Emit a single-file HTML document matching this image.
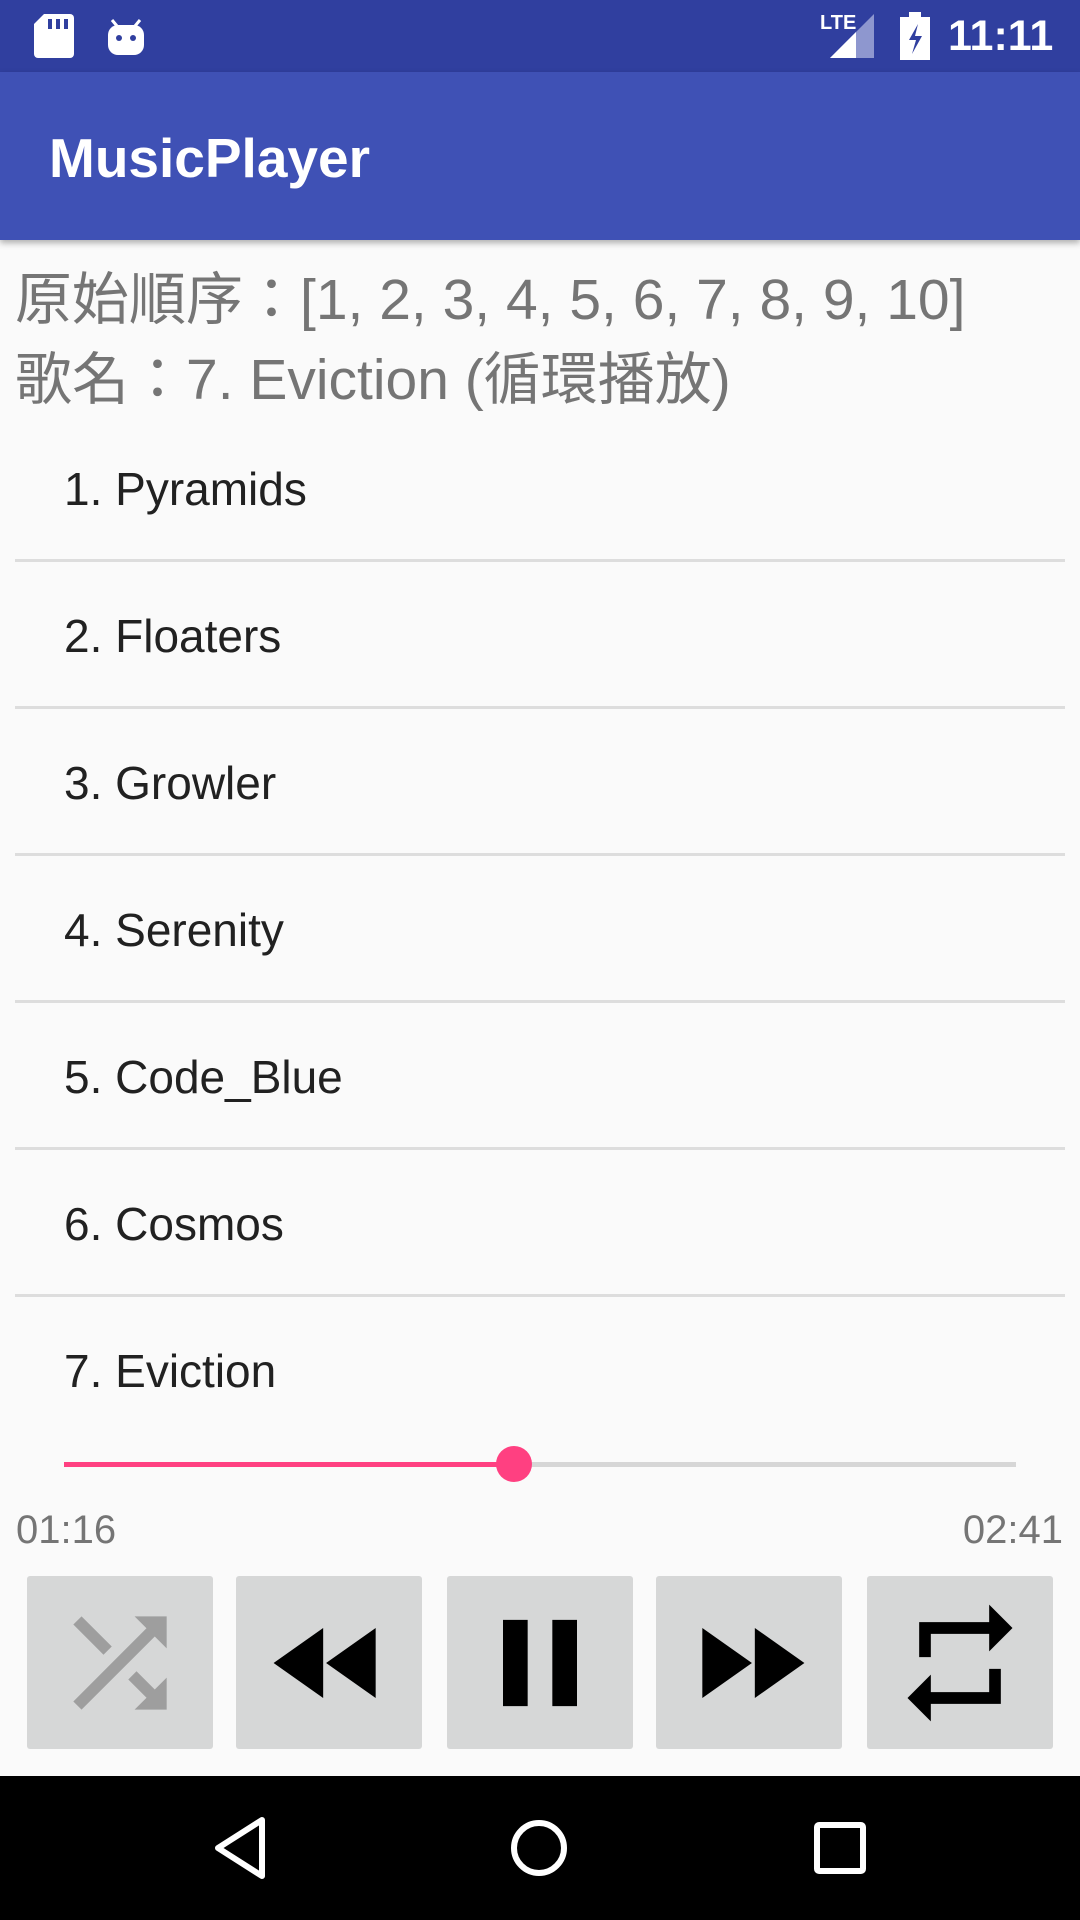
<!DOCTYPE html>
<html><head><meta charset="utf-8">
<style>
*{margin:0;padding:0;box-sizing:border-box}
body{width:1080px;height:1920px;background:#fafafa;position:relative;overflow:hidden;font-family:"Liberation Sans","Noto Sans CJK TC",sans-serif}
.abs{position:absolute}
#sb{left:0;top:0;width:1080px;height:72px;background:#303f9f}
#ab{left:0;top:72px;width:1080px;height:168px;background:#3f51b5;box-shadow:0 3px 6px rgba(0,0,0,.3)}
#ab span{position:absolute;left:49px;top:54px;font-size:55px;color:#fff;font-weight:bold}
.info{left:15px;font-size:57px;color:#757575;white-space:nowrap}
.row{left:15px;width:1050px;height:147px;border-bottom:3px solid #ddd}
.row span{position:absolute;left:49px;top:47px;font-size:46px;color:#212121}
.btn{top:1576px;width:186px;height:173px;background:#d6d7d7;border-radius:3px;display:flex;align-items:center;justify-content:center}
.t{top:1508px;font-size:40px;color:#757575}
</style></head><body>
<div id="sb" class="abs">
 <svg class="abs" style="left:34px;top:14px" width="40" height="44" viewBox="0 0 40 44"><path d="M10 0h26a4 4 0 0 1 4 4v36a4 4 0 0 1-4 4H4a4 4 0 0 1-4-4V10z" fill="#fff"/><rect x="14" y="5" width="4" height="10" fill="#303f9f"/><rect x="22" y="5" width="4" height="10" fill="#303f9f"/><rect x="30" y="5" width="4" height="10" fill="#303f9f"/></svg>
 <svg class="abs" style="left:106px;top:12px" width="40" height="44" viewBox="0 0 40 44"><path d="M6 8l5 6M34 8l-5 6" stroke="#fff" stroke-width="3"/><rect x="2" y="13" width="36" height="30" rx="10" fill="#fff"/><circle cx="13" cy="26" r="3" fill="#303f9f"/><circle cx="27" cy="26" r="3" fill="#303f9f"/></svg>
 <span class="abs" style="left:820px;top:12px;font-size:20px;color:#fff;font-weight:bold">LTE</span>
 <svg class="abs" style="left:830px;top:14px" width="44" height="44"><path d="M44 0V44H0z" fill="#8e97cf"/><path d="M26 18V44H0z" fill="#fff"/></svg>
 <svg class="abs" style="left:900px;top:12px" width="30" height="48"><rect x="9" y="0" width="12" height="5" fill="#fff"/><rect x="0" y="5" width="30" height="43" fill="#fff"/><path d="M18 12l-9 16h7l-4 14 10-18h-7z" fill="#303f9f"/></svg>
 <span class="abs" style="left:948px;top:12px;font-size:43px;color:#fff;font-weight:bold">11:11</span>
</div>
<div id="ab" class="abs"><span>MusicPlayer</span></div>
<div class="abs info" style="top:254px">原始順序：[1, 2, 3, 4, 5, 6, 7, 8, 9, 10]</div>
<div class="abs info" style="top:334px">歌名：7. Eviction (循環播放)</div>
<div class="abs row" style="top:415px"><span>1. Pyramids</span></div>
<div class="abs row" style="top:562px"><span>2. Floaters</span></div>
<div class="abs row" style="top:709px"><span>3. Growler</span></div>
<div class="abs row" style="top:856px"><span>4. Serenity</span></div>
<div class="abs row" style="top:1003px"><span>5. Code_Blue</span></div>
<div class="abs row" style="top:1150px"><span>6. Cosmos</span></div>
<div class="abs row" style="top:1297px;border:none"><span>7. Eviction</span></div>
<div class="abs" style="left:64px;top:1462px;width:952px;height:5px;background:#d6d6d6"></div>
<div class="abs" style="left:64px;top:1462px;width:450px;height:5px;background:#ff4081"></div>
<div class="abs" style="left:496px;top:1446px;width:36px;height:36px;border-radius:50%;background:#ff4081"></div>
<div class="abs t" style="left:16px">01:16</div>
<div class="abs t" style="right:17px">02:41</div>
<div class="abs btn" style="left:27px"><svg width="140" height="140" viewBox="0 0 24 24"><path fill="#9e9e9e" d="M10.59 9.17L5.41 4 4 5.41l5.17 5.17 1.42-1.41zM14.5 4l2.04 2.04L4 18.59 5.410 20 17.96 7.46 20 9.5V4h-5.5zm.33 9.41l-1.41 1.41 3.13 3.130L14.5 20H20v-5.5l-2.04 2.04-3.13-3.13z"/></svg></div>
<div class="abs btn" style="left:236px"><svg width="140" height="140" viewBox="0 0 24 24"><path d="M11 18V6l-8.5 6 8.5 6zm.5-6l8.5 6V6l-8.5 6z"/></svg></div>
<div class="abs btn" style="left:447px"><svg width="148" height="148" viewBox="0 0 24 24"><path d="M6 19h4V5H6v14zm8-14v14h4V5h-4z"/></svg></div>
<div class="abs btn" style="left:656px"><svg width="140" height="140" viewBox="0 0 24 24"><path d="M4 18l8.5-6L4 6v12zm9-12v12l8.5-6L13 6z"/></svg></div>
<div class="abs btn" style="left:867px"><svg width="140" height="140" viewBox="0 0 24 24"><path d="M7 7h10v3l4-4-4-4v3H5v6h2V7zm10 10H7v-3l-4 4 4 4v-3h12v-6h-2v4z"/></svg></div>
<div class="abs" style="left:0;top:1776px;width:1080px;height:144px;background:#000"></div>
<svg class="abs" style="left:0;top:1776px" width="1080" height="144">
 <path d="M262 44L218 72L262 100Z" fill="none" stroke="#fff" stroke-width="6" stroke-linejoin="round"/>
 <circle cx="539" cy="72" r="25" fill="none" stroke="#fff" stroke-width="6"/>
 <rect x="817" y="49" width="46" height="46" rx="2" fill="none" stroke="#fff" stroke-width="6"/>
</svg>
</body></html>
